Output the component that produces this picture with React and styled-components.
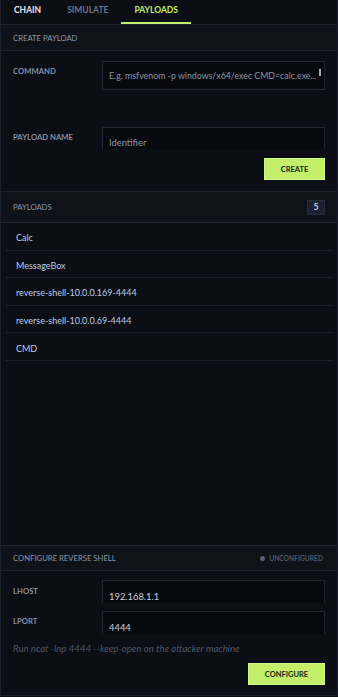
import React from 'react';
import styled, { createGlobalStyle } from 'styled-components';


const GlobalStyle = createGlobalStyle`
  html, body {
    margin: 0;
    padding: 0;
    background: #0b0e14;
  }

  * {
    box-sizing: border-box;
  }
`;


const Shell = styled.div`
  display: flex;
  flex-direction: column;
  width: 338px;
  height: 696px;
  background: #0b0e14;
  border: 1px solid #1c212b;
  border-top: none;
  font-family: Lato, "Open Sans", sans-serif;
  overflow: hidden;
`;


const Tabs = styled.nav`
  display: flex;
  height: 25px;
  border-bottom: 1px solid #1e232d;
`;


const Tab = styled.div`
  display: flex;
  align-items: center;
  height: 24px;
  padding: 0 13px 3px;
  font-size: 8.5px;
  font-weight: 700;
  text-transform: uppercase;
  color: ${({ active, bright }) => active ? '#c3ef6b' : bright ? '#e3e9f1' : '#6c7587'};
  border-bottom: 2px solid ${({ active }) => active ? '#c3ef6b' : 'transparent'};
`;


const SectionHeader = styled.div`
  display: flex;
  align-items: center;
  justify-content: space-between;
  height: ${({ tall }) => tall ? '31px' : '26px'};
  padding: 0 12px;
  background: #0e1219;
  border-bottom: 1px solid #1e232d;
  ${({ top }) => top && 'border-top: 1px solid #1e232d;'}
  font-size: 7.7px;
  color: #8d97a8;
  text-transform: uppercase;
`;


const Form = styled.div`
  display: flex;
  flex-direction: column;
  padding: ${({ pad }) => pad};
  border-bottom: ${({ divided }) => divided ? '1px solid #1e232d' : 'none'};
`;


const Field = styled.div`
  display: grid;
  grid-template-columns: 89px 1fr;
  margin-bottom: ${({ gap }) => gap || 0}px;
`;


const Label = styled.label`
  padding-top: ${({ offset }) => offset || 5}px;
  font-size: 7.7px;
  line-height: 10px;
  font-weight: 700;
  color: #858fa0;
  text-transform: uppercase;
`;


const AreaWrap = styled.div`
  position: relative;
`;


const Area = styled.textarea`
  display: block;
  width: 100%;
  height: 29px;
  resize: none;
  overflow: hidden;
  white-space: nowrap;
  padding: 8px 6px 0;
  background: #07090e;
  border: 1px solid #1f2531;
  color: #c9d2de;
  font-family: inherit;
  font-size: 8.8px;
  line-height: 12px;
  outline: none;

  &::placeholder {
    color: #8a94a4;
  }
`;


const Thumb = styled.span`
  position: absolute;
  top: 8px;
  right: 4px;
  width: 2px;
  height: 7px;
  background: #a3a9b2;
`;


const Input = styled.input`
  display: block;
  width: 100%;
  height: ${({ h }) => h || 23}px;
  padding: 8px 6px 0;
  background: #07090e;
  border: 1px solid #1f2531;
  border-bottom: none;
  color: #c9d2de;
  font-family: inherit;
  font-size: 9.4px;
  outline: none;

  &::placeholder {
    color: #8a94a4;
  }
`;


const Button = styled.button`
  align-self: flex-end;
  height: 22px;
  width: ${({ w }) => w}px;
  margin-top: ${({ gap }) => gap}px;
  padding: 0;
  background: #c3ef6b;
  border: 1px solid #d3f78c;
  color: #1c2410;
  font-family: inherit;
  font-size: 7.5px;
  font-weight: 700;
  text-transform: uppercase;
  cursor: pointer;
`;


const Badge = styled.span`
  display: flex;
  align-items: center;
  justify-content: center;
  width: 18px;
  height: 15px;
  background: #1b2130;
  border: 1px solid #252c3b;
  color: #c3cfe2;
  font-size: 8.6px;
  font-weight: 700;
`;


const List = styled.ul`
  flex: 1;
  list-style: none;
  margin: 0;
  padding: 0 4px;
`;


const Item = styled.li`
  display: flex;
  align-items: center;
  height: 27.6px;
  padding: 3px 11px 0;
  border-bottom: 1px solid #1a1f29;
  font-size: 9px;
  color: #b9cdea;
`;


const Status = styled.span`
  display: flex;
  align-items: center;
  gap: 4px;
  margin-right: 2px;
  font-size: 6.7px;
  font-weight: 700;
  color: #4f5766;

  &::before {
    content: '';
    width: 5px;
    height: 5px;
    border-radius: 50%;
    background: #5c6270;
  }
`;


const Hint = styled.p`
  margin: 9px 0 0;
  font-size: 9.6px;
  line-height: 12px;
  font-style: italic;
  color: #4e5667;
`;


const payloads = [
  'Calc',
  'MessageBox',
  'reverse-shell-10.0.0.169-4444',
  'reverse-shell-10.0.0.69-4444',
  'CMD',
];


const App = () => (
  <>
    <GlobalStyle />
    <Shell>
      <Tabs>
        <Tab bright>Chain</Tab>
        <Tab>Simulate</Tab>
        <Tab active>Payloads</Tab>
      </Tabs>

      <SectionHeader>Create payload</SectionHeader>
      <Form pad="10px 12px 11px" divided>
        <Field gap={37}>
          <Label>Command</Label>
          <AreaWrap>
            <Area placeholder="E.g. msfvenom -p windows/x64/exec CMD=calc.exe..." />
            <Thumb />
          </AreaWrap>
        </Field>
        <Field>
          <Label>Payload name</Label>
          <Input h={22} placeholder="Identifier" />
        </Field>
        <Button w={61} gap={9}>Create</Button>
      </Form>

      <SectionHeader tall>
        Payloads
        <Badge>5</Badge>
      </SectionHeader>
      <List>
        {payloads.map(name => <Item key={name}>{name}</Item>)}
      </List>

      <SectionHeader top>
        Configure reverse shell
        <Status>Unconfigured</Status>
      </SectionHeader>
      <Form pad="9px 12px 10px">
        <Field gap={8}>
          <Label offset={6}>LHOST</Label>
          <Input defaultValue="192.168.1.1" />
        </Field>
        <Field>
          <Label>LPORT</Label>
          <Input defaultValue="4444" />
        </Field>
        <Hint>Run ncat -lnp 4444 --keep-open on the attacker machine</Hint>
        <Button w={77} gap={8}>Configure</Button>
      </Form>
    </Shell>
  </>
);


export default App;
